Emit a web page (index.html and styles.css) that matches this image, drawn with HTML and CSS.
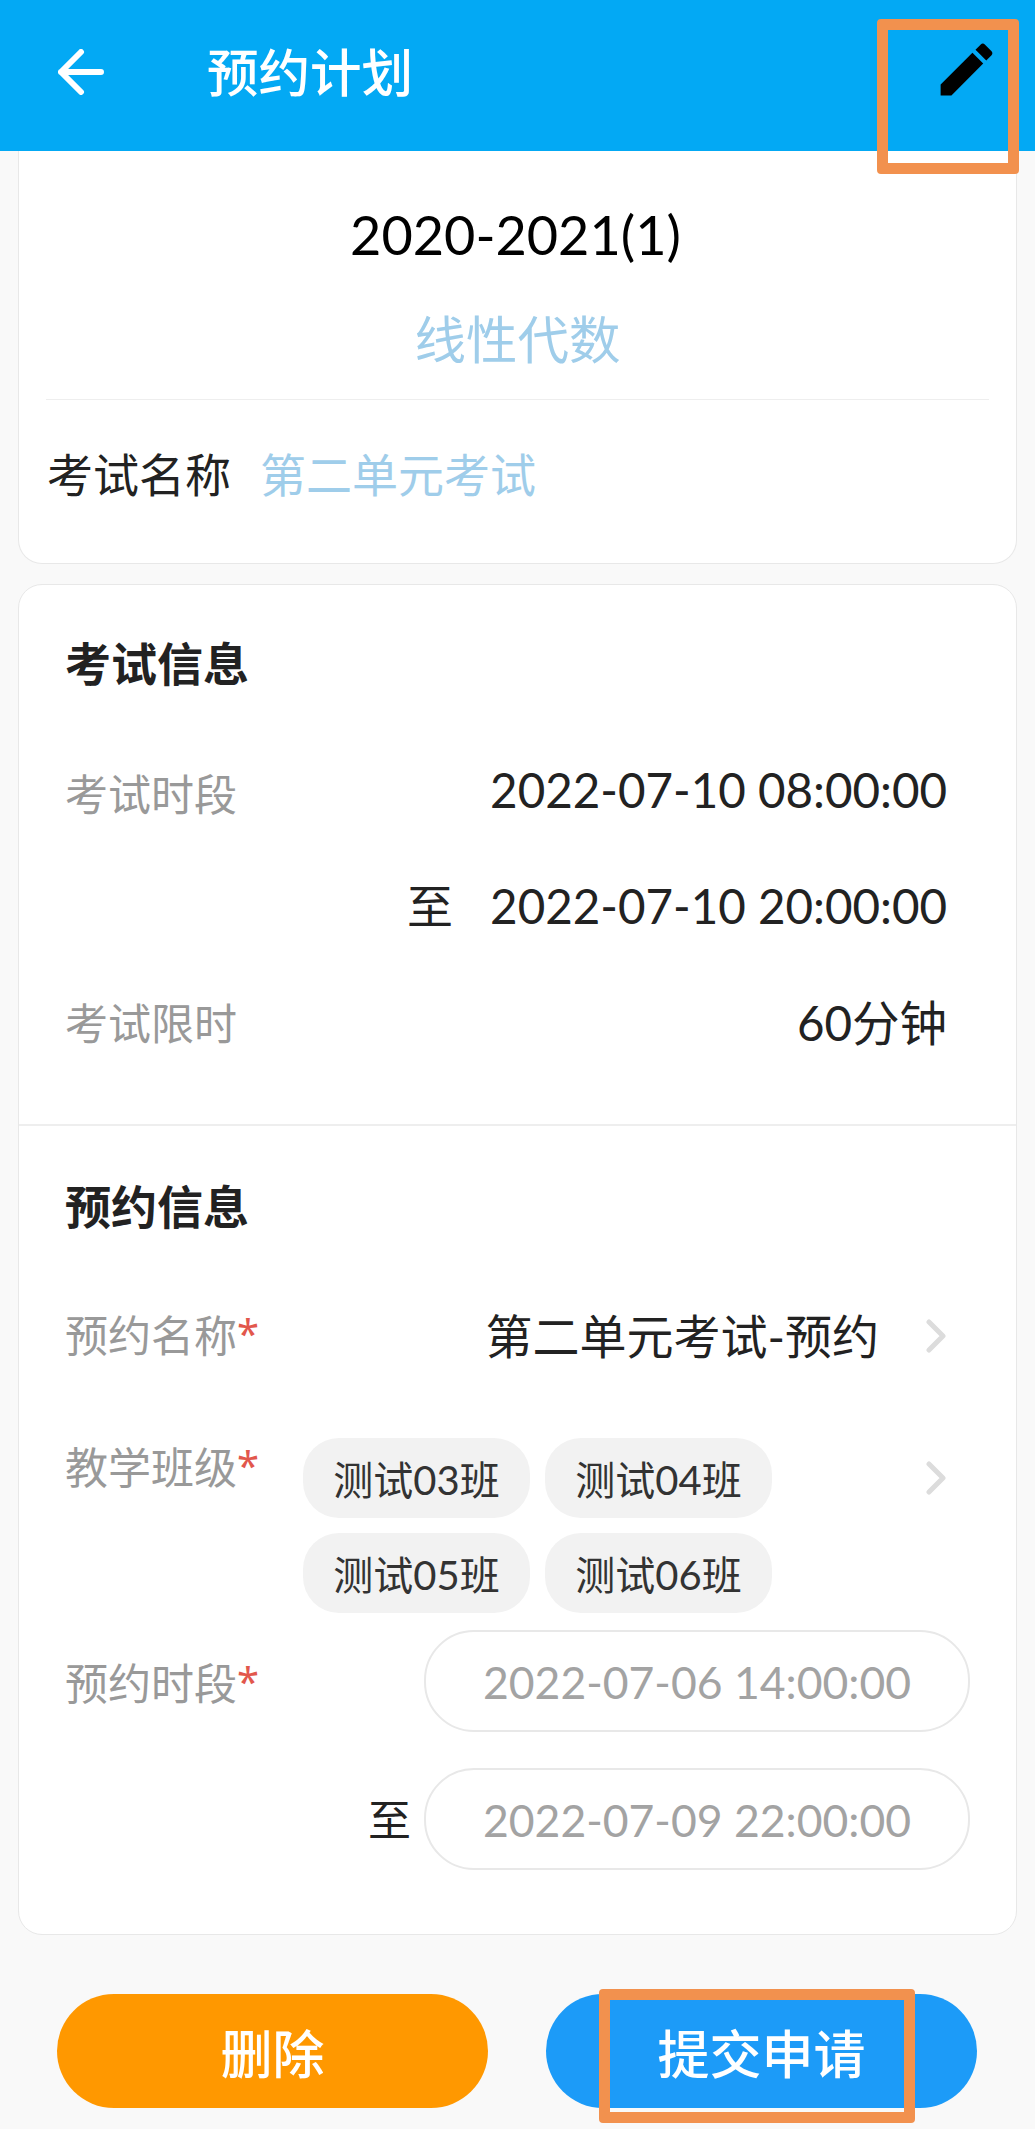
FILE: index.html
```html
<!DOCTYPE html>
<html lang="zh-CN">
<head>
  <meta charset="UTF-8" />
  <meta name="viewport" content="width=device-width, initial-scale=1.0" />
  <title>预约计划</title>
  <link rel="stylesheet" href="styles.css">
</head>
<body>
  <header class="topbar">
    <svg class="back-icon" viewBox="0 0 46 46" width="46" height="46">
      <path d="M3 23H43M23 3L3 23L23 43" fill="none" stroke="#fff" stroke-width="6" stroke-linecap="round" stroke-linejoin="round" />
    </svg>
    <h1 class="topbar-title">预约计划</h1>
    <svg class="edit-icon" viewBox="0 0 24 24" width="69" height="69">
      <path d="M3 17.25V21h3.75L17.81 9.94l-3.75-3.75L3 17.25zM20.71 7.04c.39-.39.39-1.02 0-1.41l-2.34-2.34c-.39-.39-1.02-.39-1.41 0l-1.83 1.83 3.75 3.75 1.83-1.83z" fill="#000" />
    </svg>
  </header>

  <main class="content">
    <section class="card card-head">
      <p class="term">2020-2021(1)</p>
      <p class="course">线性代数</p>
      <hr class="thin-line" />
      <p class="exam-name"><span>考试名称</span><span class="exam-link">第二单元考试</span></p>
    </section>

    <section class="card card-info">
      <div class="block block-exam">
        <h2 class="block-title">考试信息</h2>
        <div class="row row-first">
          <span class="label">考试时段</span>
          <span class="value">2022-07-10 08:00:00</span>
        </div>
        <div class="row row-second">
          <span class="value"><span class="to">至</span>2022-07-10 20:00:00</span>
        </div>
        <div class="row row-third">
          <span class="label">考试限时</span>
          <span class="value">60分钟</span>
        </div>
      </div>

      <div class="block block-book">
        <h2 class="block-title">预约信息</h2>
        <div class="row row-name">
          <span class="label">预约名称<i class="req">*</i></span>
          <span class="value value-name">第二单元考试-预约</span>
          <svg class="chevron" viewBox="0 0 20 34" width="20" height="34"><path d="M3 3L17 17L3 31" fill="none" stroke="#dcdcdc" stroke-width="5" stroke-linecap="round" stroke-linejoin="round" /></svg>
        </div>
        <div class="row row-class">
          <span class="label">教学班级<i class="req">*</i></span>
          <div class="chips">
            <span class="chip">测试03班</span>
            <span class="chip">测试04班</span>
            <span class="chip">测试05班</span>
            <span class="chip">测试06班</span>
          </div>
          <svg class="chevron chevron-class" viewBox="0 0 20 34" width="20" height="34"><path d="M3 3L17 17L3 31" fill="none" stroke="#dcdcdc" stroke-width="5" stroke-linecap="round" stroke-linejoin="round" /></svg>
        </div>
        <div class="row row-time">
          <span class="label">预约时段<i class="req">*</i></span>
          <span class="field">2022-07-06 14:00:00</span>
        </div>
        <div class="row row-time-end">
          <span class="to-small">至</span>
          <span class="field">2022-07-09 22:00:00</span>
        </div>
      </div>
    </section>

    <div class="actions">
      <button class="btn btn-delete">删除</button>
      <button class="btn btn-submit">提交申请</button>
    </div>
  </main>

  <!-- orange marks drawn over the screenshot -->
  <div class="mark mark-edit"></div>
  <div class="mark mark-submit"></div>
</body>
</html>
```

FILE: styles.css
```css
* {
  box-sizing: border-box;
  margin: 0;
  padding: 0;
}
body {
  position: relative;
  height: 2129px;
  overflow: hidden;
  background: #f9f9f9;
  font-family: "Lato", "Noto Sans CJK SC", sans-serif;
  color: #222;
}
/* Barra superiore */
.topbar {
  display: flex;
  align-items: center;
  height: 151px;
  padding: 0 34px 7px 58px;
  background: #03a9f4;
}
.back-icon {
  flex: none;
}
.topbar-title {
  margin: 0 0 5px 103px;
  font-size: 51.5px;
  font-weight: 500;
  color: #fff;
}
.edit-icon {
  margin-left: auto;
  margin-top: -5px;
}
/* Card */
.content {
  padding: 0 18px;
}
.card {
  background: #fff;
  border: 1px solid #e8e8e8;
  border-radius: 24px;
}
.card-head {
  height: 413px;
  padding-top: 54px;
  border-top: none;
  border-top-left-radius: 0;
  border-top-right-radius: 0;
  text-align: center;
}
.term {
  height: 60px;
  padding-right: 4px;
  font-size: 54px;
  line-height: 60px;
  color: #000;
}
.course {
  height: 60px;
  margin-top: 44px;
  font-size: 51.5px;
  line-height: 60px;
  color: #9fcdea;
}
.thin-line {
  height: 1px;
  margin: 30px 27px 0;
  border: none;
  background: #eee;
}
.exam-name {
  display: flex;
  gap: 29px;
  margin-top: 45px;
  padding-left: 28px;
  font-size: 46px;
  line-height: 60px;
}
.exam-link {
  color: #9fcdea;
}
.card-info {
  height: 1351px;
  margin-top: 20px;
}
.block {
  padding: 49px 69px 0 46px;
}
.block-exam {
  height: 541px;
  border-bottom: 2px solid #eee;
}
.block-title {
  height: 60px;
  font-size: 46px;
  line-height: 60px;
  font-weight: 700;
  color: #222;
}
.row {
  display: flex;
  align-items: flex-start;
  justify-content: space-between;
}
.label {
  font-size: 43px;
  line-height: 60px;
  color: #999;
}
.req {
  position: relative;
  top: -4px;
  font-family: "Noto Sans", sans-serif;
  font-style: normal;
  font-size: 40px;
  color: #e2574c;
}
.value {
  display: flex;
  align-items: center;
  font-size: 47.5px;
  line-height: 60px;
  color: #222;
}
.row-first {
  margin-top: 66px;
}
.row-first .label {
  margin-top: 5px;
}
.row-third .label {
  margin-top: 1px;
}
.row-second {
  justify-content: flex-end;
  margin-top: 51px;
}
.to {
  margin-right: 37px;
  font-size: 46px;
}
.row-third {
  margin-top: 57px;
}
.block-book {
  padding-top: 51px;
}
.row-name {
  margin-top: 69px;
}
.value-name {
  margin-left: auto;
  font-size: 47px;
}
.chevron {
  flex: none;
  margin: 13px 1px 0 47px;
}
.row-class {
  margin-top: 71px;
}
.row-class .label {
  flex: none;
  width: 238px;
}
.chips {
  display: flex;
  flex-wrap: wrap;
  gap: 15px 15px;
  width: 480px;
}
.chip {
  display: flex;
  align-items: center;
  justify-content: center;
  width: 227px;
  height: 80px;
  border-radius: 36px;
  background: #f2f2f2;
  font-size: 40px;
  color: #333;
}
.chevron-class {
  margin: 23px 1px 0 auto;
}
.row-time {
  margin-top: 17px;
  margin-right: -23px;
}
.row-time .label {
  margin-top: 24px;
}
.field {
  display: flex;
  align-items: center;
  justify-content: center;
  width: 546px;
  height: 102px;
  border: 2px solid #e8e8e8;
  border-radius: 50px;
  font-size: 44.5px;
  color: #a3a3a3;
}
.row-time-end {
  justify-content: flex-end;
  margin-top: 36px;
  margin-right: -23px;
}
.to-small {
  margin: 22px 13px 0 0;
  font-size: 43px;
  line-height: 60px;
  color: #222;
}
/* Pulsanti */
.actions {
  display: flex;
  justify-content: space-between;
  margin-top: 59px;
  padding: 0 40px 0 39px;
}
.btn {
  width: 431px;
  height: 114px;
  border: none;
  border-radius: 57px;
  font-family: inherit;
  font-size: 52px;
  font-weight: 500;
  color: #fff;
}
.btn-delete {
  background: #ff9800;
}
.btn-submit {
  background: #1c9bf8;
}
/* Segni arancioni sopra lo screenshot */
.mark {
  position: absolute;
  border: 11px solid #f2914e;
  border-radius: 4px;
}
.mark-edit {
  left: 877px;
  top: 19px;
  width: 142px;
  height: 155px;
}
.mark-submit {
  left: 599px;
  top: 1989px;
  width: 316px;
  height: 134px;
}
```
